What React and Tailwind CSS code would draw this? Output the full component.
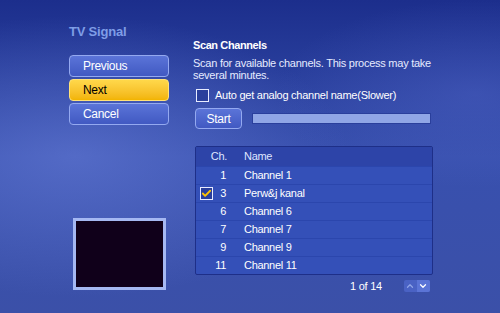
import { Check, ChevronUp, ChevronDown } from 'lucide-react';

const channels = [
  { ch: '1', name: 'Channel 1' },
  { ch: '3', name: 'Perw&j kanal', checked: true },
  { ch: '6', name: 'Channel 6' },
  { ch: '7', name: 'Channel 7' },
  { ch: '9', name: 'Channel 9' },
  { ch: '11', name: 'Channel 11' },
];

const NavButton = ({ children, active }) => (
  <button
    className={`h-[22px] w-[100px] rounded-[4px] border pl-[13px] text-left text-[12px] leading-none tracking-[-0.3px] ${
      active
        ? 'border-[#ffe27a] bg-gradient-to-b from-[#ffd84a] to-[#f2b400] text-black'
        : 'border-[#94a9f0] bg-gradient-to-b from-[#5b74d8] to-[#4159c2] text-white'
    }`}
  >
    {children}
  </button>
);

export default function App() {
  return (
    <div
      className="relative h-[313px] w-[500px] overflow-hidden bg-gradient-to-b from-[#1c2e8c] via-[#3850ae] to-[#3b50a8] text-white"
      style={{ fontFamily: '"Liberation Sans", Arial, sans-serif' }}
    >
      {/* soft light band */}
      <div className="pointer-events-none absolute inset-0 bg-[radial-gradient(ellipse_55%_45%_at_15%_50%,rgba(110,132,222,0.5),transparent)]" />
      <div className="pointer-events-none absolute inset-0 bg-[radial-gradient(ellipse_40%_30%_at_95%_30%,rgba(90,110,210,0.35),transparent)]" />
      <div className="relative flex h-full">
        {/* Left column */}
        <div className="ml-[69px] flex w-[100px] flex-col pt-[24px]">
          <div className="text-[13px] font-bold leading-[16px] tracking-[-0.2px] text-[#7f9de6]">TV Signal</div>
          <div className="mt-[15px] flex flex-col gap-[2px]">
            <NavButton>Previous</NavButton>
            <NavButton active>Next</NavButton>
            <NavButton>Cancel</NavButton>
          </div>
          <div className="ml-[4px] mt-[93px] h-[72px] w-[93px] border-[3px] border-[#a5b8f2] bg-[#10001a]" />
        </div>

        {/* Right column */}
        <div className="ml-[24px] flex w-[250px] flex-col pt-[38px] text-[11px] tracking-[-0.25px]">
          <div className="text-[11px] font-bold leading-[14px] tracking-[-0.4px]">Scan Channels</div>
          <p className="mt-[5px] w-[245px] leading-[12px] text-[#e6ebff]">
            Scan for available channels. This process may take several minutes.
          </p>
          <label className="ml-[3px] mt-[7px] flex items-center gap-[6px] leading-[14px]">
            <span className="h-[13px] w-[13px] border border-[#e8ecff] bg-[#2a3f9c]" />
            Auto get analog channel name(Slower)
          </label>
          <div className="mt-[6px] flex items-center gap-[10px]">
            <button className="ml-[2px] h-[21px] w-[47px] rounded-[4px] border border-[#94a9f0] bg-gradient-to-b from-[#5b74d8] to-[#4159c2] text-[12px]">
              Start
            </button>
            <div className="h-[11px] w-[179px] border border-[#2a3f9c] bg-[#90a6e6]" />
          </div>

          {/* Channel table */}
          <div className="ml-[2px] mt-[17px] w-[238px] overflow-hidden rounded-[2px] border border-[#1e2f88] bg-[#3450b8] tracking-[-0.3px]">
            <div className="flex h-[19px] items-center bg-[#2d44a8] text-[#dfe6ff]">
              <span className="w-[31px] text-right">Ch.</span>
              <span className="ml-[17px]">Name</span>
            </div>
            {channels.map((c) => (
              <div key={c.ch} className="flex h-[18px] items-center border-t border-[#2b46ad]">
                <span className="flex w-[17px] justify-end">
                  {c.checked && (
                    <span className="flex h-[13px] w-[13px] items-center justify-center border border-[#e8ecff] bg-[#2a3f9c]">
                      <Check size={11} strokeWidth={4} className="text-[#ffc400]" />
                    </span>
                  )}
                </span>
                <span className="w-[13px] text-right">{c.ch}</span>
                <span className="ml-[18px]">{c.name}</span>
              </div>
            ))}
          </div>

          <div className="mt-[3px] flex items-center">
            <span className="ml-[157px] whitespace-nowrap">1 of 14</span>
            <div className="ml-[22px] flex h-[12px] w-[26px] overflow-hidden rounded-[2px] bg-[#4a62c4]">
              <span className="flex flex-1 items-center justify-center text-[#8fa3e6]">
                <ChevronUp size={10} strokeWidth={3} />
              </span>
              <span className="flex flex-1 items-center justify-center bg-[#5b74d6] text-white">
                <ChevronDown size={10} strokeWidth={3} />
              </span>
            </div>
          </div>
        </div>
      </div>
    </div>
  );
}
